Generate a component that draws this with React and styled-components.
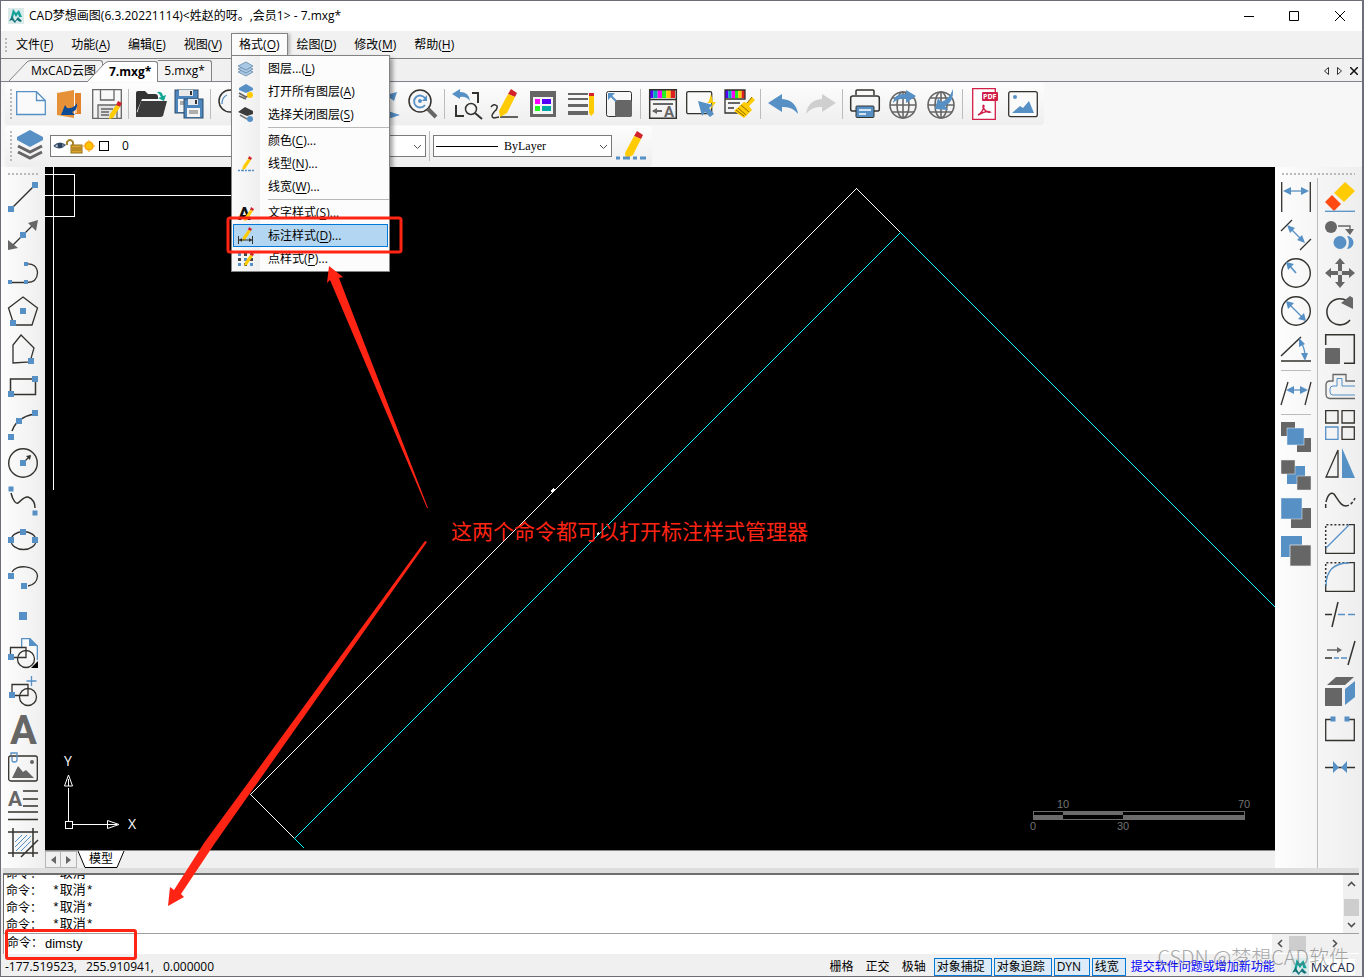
import React from "react";
import styled, { createGlobalStyle, css } from "styled-components";

const BLUE = "#5690c5";
const GREY = "#666666";
const DARK = "#33322e";
const YELLOW = "#ffcb05";
const RED = "#d2232a";
const MARK = "#ff2414";
const UI = '"Open Sans", "Noto Sans CJK SC", sans-serif';

const GlobalStyle = createGlobalStyle`
  * { box-sizing: border-box; }
  body { margin: 0; background: #f0f0f0; color: #000; font: 12px/16px ${UI}; }
  button, input, select { font: inherit; color: inherit; }
  u { text-underline-offset: 2px; }
`;

/* ---------- window frame ---------- */

const Window = styled.div`
  position: relative;
  display: flex;
  flex-direction: column;
  min-height: 100vh;
  overflow: hidden;
  border: 1px solid #6c6f7a;
  border-right-width: 2px;
`;

const TitleBar = styled.header`
  display: flex;
  align-items: center;
  height: 30px;
  padding-left: 7px;
  gap: 5px;
  background: #fff;
`;

const Title = styled.h1`
  flex: 1;
  margin: 0;
  font-size: 12px;
  font-weight: 400;
`;

const Plain = styled.button`
  display: flex;
  align-items: center;
  justify-content: center;
  padding: 0;
  border: 0;
  background: none;
  width: ${(p) => p.$w || 38}px;
  height: ${(p) => p.$h || 38}px;
  flex: none;
`;

const MenuBar = styled.nav`
  display: flex;
  align-items: center;
  height: 27px;
  padding-left: 4px;
  background: #f1f1f1;
`;

const MenuEntry = styled.div`
  position: relative;
`;

const MenuButton = styled.button`
  display: block;
  height: 23px;
  padding: 0 8px;
  border: 1px solid transparent;
  border-bottom: 0;
  background: none;
  white-space: nowrap;
  ${(p) => p.$open && css`
    border-color: #838383;
    background: #fbfbfb;
    padding: 0 7px;
    box-shadow: 3px 0 3px -1px #b5b5b5;
  `}
`;

const Dropdown = styled.div`
  position: absolute;
  z-index: 5;
  left: 0;
  top: 22px;
  width: 159px;
  padding: 1px 0;
  border: 1px solid #838383;
  background: linear-gradient(90deg, #fafafa 0, #efefef 28px, #fcfcfc 28px);
  box-shadow: 3px 3px 4px rgba(0, 0, 0, 0.35);
`;

const DropItem = styled.button`
  display: flex;
  align-items: center;
  gap: 14px;
  width: 155px;
  height: 23px;
  margin: 0 0 0 1px;
  padding: 0 0 0 4px;
  border: 1px solid ${(p) => (p.$active ? "#0078d7" : "transparent")};
  background: ${(p) => (p.$active ? "#b3d6f2" : "none")};
  white-space: nowrap;
`;

const DropRule = styled.hr`
  height: 1px;
  margin: 1px 0 1px 36px;
  border: 0;
  background: #b9b9b9;
`;

const Grip = styled.span`
  flex: none;
  width: 2px;
  height: ${(p) => p.$h}px;
  background: repeating-linear-gradient(#b9b9b9 0 2px, transparent 2px 4px);
`;

const GripRow = styled.span`
  height: 2px;
  margin: 6px 7px 3px;
  background: repeating-linear-gradient(90deg, #b9b9b9 0 2px, transparent 2px 4px);
`;

/* ---------- document tabs ---------- */

const TabBar = styled.div`
  display: flex;
  align-items: flex-end;
  height: 24px;
  border-top: 1px solid #838383;
  padding-left: 8px;
  background: linear-gradient(#f0f0f0, #f0f0f0) 0 0 / 100% 22px no-repeat, #83838f;
`;

const Tab = styled.button`
  position: relative;
  display: flex;
  height: 21px;
  padding: 0;
  border: 0;
  margin-left: ${(p) => (p.$overlap ? -16 : 0)}px;
  margin-bottom: ${(p) => (p.$active ? 0 : 1)}px;
  background: none;
  font-weight: ${(p) => (p.$active ? 700 : 400)};
  white-space: nowrap;
`;

const TabLabel = styled.span`
  height: 100%;
  padding: 2px 6px 0 ${(p) => (p.$slant ? 0 : 6)}px;
  border: 1px solid #838383;
  border-bottom: 0;
  border-left-width: ${(p) => (p.$slant || p.$joined ? 0 : 1)}px;
  border-radius: 0 3px 0 0;
  background: ${(p) => (p.$active ? "#fff" : "#f3f3f3")};
`;

const Spacer = styled.span`
  flex: 1;
`;

/* ---------- toolbars ---------- */

const ToolArea = styled.div`
  display: flex;
  flex-direction: column;
  align-items: flex-start;
  gap: 1px;
  height: 85px;
  padding: 1px 0 0 4px;
  background: #f7f7f7;
`;

const ToolRow = styled.div`
  display: flex;
  align-items: center;
  height: 42px;
  padding: 0 2px 0 5px;
  border-radius: 4px;
  background: linear-gradient(#fdfdfd, #eeeeee);
`;

const Divider = styled.span`
  flex: none;
  width: 6px;
  height: 30px;
  background: linear-gradient(#bcbcbc, #bcbcbc) 2px 0 / 1px 100% no-repeat;
`;

const Combo = styled.span`
  position: relative;
  display: flex;
  align-items: center;
  width: ${(p) => p.$w}px;
  height: 22px;
  margin-right: ${(p) => p.$gap || 0}px;
  border: 1px solid #7a7a7a;
  background: #fff;
  & > svg { position: absolute; pointer-events: none; }
`;

const Select = styled.select`
  appearance: none;
  width: 100%;
  height: 100%;
  padding: 0 20px 0 ${(p) => p.$pad}px;
  border: 0;
  background: none;
  font-size: 12px;
  ${(p) => p.$serif && css`font-family: "Liberation Serif", serif;`}
`;

const ComboArrow = styled.span`
  position: absolute;
  right: 3px;
  top: 3px;
  pointer-events: none;
  svg path { stroke-width: 1; }
`;

/* ---------- work area ---------- */

const Work = styled.main`
  display: flex;
  flex: 1;
`;

const SideTools = styled.div`
  display: flex;
  flex: none;
  flex-direction: column;
  background: linear-gradient(90deg, #fdfdfd, #eeeeee);
`;

const SideColumns = styled.div`
  display: flex;
  flex: 1;
`;

const SideColumn = styled.div`
  display: flex;
  flex-direction: column;
  align-items: center;
  width: ${(p) => p.$w}px;
  & + & { border-left: 1px solid #bcbcbc; }
`;

const SideRule = styled.hr`
  width: 30px;
  height: 1px;
  margin: 2px 0 3px;
  border: 0;
  background: #bcbcbc;
`;

const Center = styled.div`
  display: flex;
  flex: 1;
  flex-direction: column;
  min-width: 0;
`;

const Canvas = styled.div`
  position: relative;
  flex: 1;
  min-height: 400px;
  overflow: hidden;
  background: #000;
`;

const Drawing = styled.svg`
  position: absolute;
  inset: 0;
  width: 100%;
  height: 100%;
`;

const Pinned = styled.svg`
  position: absolute;
  bottom: 0;
  ${(p) => p.$side}: 0;
`;

const SheetBar = styled.div`
  display: flex;
  align-items: center;
  height: 18px;
  border-top: 1px solid #888;
`;

const SheetNav = styled(Plain)`
  border: 1px solid #b5b5b5;
  & + & { border-left: 0; }
`;

const SheetTab = styled.button`
  display: flex;
  height: 17px;
  padding: 0;
  border: 0;
  background: none;
  line-height: 15px;
`;

const SheetName = styled.span`
  border-bottom: 1px solid #000;
  background: #fff;
`;

/* ---------- command line ---------- */

const Command = styled.section`
  position: relative;
  border-top: 5px solid #dedede;
  margin: 0 3px 0 2px;
`;

const Log = styled.div`
  display: flex;
  height: 61px;
  border-top: 2px solid #6e6e6e;
  border-left: 1px solid #6e6e6e;
  border-bottom: 1px solid #a0a0a0;
  background: #fff;
`;

const LogLines = styled.div`
  display: flex;
  flex: 1;
  flex-direction: column;
  justify-content: flex-end;
  overflow: hidden;
  padding-left: 2px;
`;

const LogLine = styled.div`
  display: flex;
  flex: none;
  height: 17px;
  font: 13px/17px "Liberation Mono", "Noto Sans CJK SC", monospace;
`;

const Prompt = styled.span`
  flex: none;
  width: ${(p) => p.$w}px;
  font: 12px/16px "Noto Sans CJK SC", sans-serif;
  white-space: nowrap;
`;

const ScrollV = styled.div`
  display: flex;
  flex-direction: column;
  align-items: center;
  width: 16px;
  background: #f0f0f0;
`;

const Thumb = styled.span`
  width: ${(p) => p.$w}px;
  height: ${(p) => p.$h}px;
  background: #cdcdcd;
`;

const Entry = styled.label`
  display: flex;
  align-items: flex-start;
  height: 20px;
  padding-left: 3px;
  border-left: 1px solid #a0a0a0;
  background: #fff;
`;

const EntryInput = styled.input`
  flex: 1;
  height: 20px;
  padding: 0;
  border: 0;
  outline: 0;
  background: none;
  font: 13px/20px "Liberation Sans", sans-serif;
`;

const ScrollH = styled.span`
  display: flex;
  align-items: center;
  width: 87px;
  height: 19px;
  padding-right: 16px;
  background: #f0f0f0;
`;

const EntryMark = styled.span`
  position: absolute;
  z-index: 7;
  left: 2px;
  bottom: -6px;
  width: 132px;
  height: 31px;
  border: 3px solid ${MARK};
  border-radius: 3px;
  pointer-events: none;
`;

/* ---------- status bar ---------- */

const Status = styled.footer`
  display: flex;
  align-items: center;
  height: 22px;
  padding: 3px 7px 0 4px;
`;

const Coords = styled.output`
  display: flex;
  flex: 1;
  gap: 9px;
`;

const Toggle = styled.button`
  height: 18px;
  margin-right: ${(p) => (p.$on ? 2 : 4)}px;
  padding: 0 ${(p) => (p.$on ? 2 : 3)}px;
  border: 1px solid ${(p) => (p.$on ? "#0078d7" : "transparent")};
  background: ${(p) => (p.$on ? "#dcebf7" : "none")};
  line-height: 16px;
  white-space: nowrap;
  min-width: ${(p) => p.$w || 0}px;
  text-align: left;
`;

const Feedback = styled.a`
  margin: 0 16px 0 3px;
  color: #0000ff;
  text-decoration: none;
  white-space: nowrap;
`;

const Brand = styled.span`
  display: flex;
  align-items: center;
  gap: 2px;
  height: 16px;
  background: #fff;
  color: #1c2a4a;
  font-size: 13px;
`;

const Watermark = styled.span`
  position: absolute;
  z-index: 6;
  right: 13px;
  bottom: 5px;
  color: rgba(110, 110, 110, 0.6);
  font: 300 20px/28px "Noto Sans CJK SC", sans-serif;
  pointer-events: none;
  white-space: nowrap;
`;

const Notes = styled.svg`
  position: absolute;
  z-index: 7;
  left: -1px;
  top: -1px;
  pointer-events: none;
`;

/* ---------- icon parts ---------- */

const Node = ({ x, y, s = 6 }) => <rect x={x - s / 2} y={y - s / 2} width={s} height={s} fill={BLUE} />;
const L = ({ d, c = DARK, w = 1.3, ...r }) => <path d={d} fill="none" stroke={c} strokeWidth={w} {...r} />;
const F = ({ d, c = BLUE, ...r }) => <path d={d} fill={c} {...r} />;
const Box = ({ x = 0, y = 0, w, h, c = GREY, ...r }) => <rect x={x} y={y} width={w} height={h} fill={c} {...r} />;

const Pencil = () => (
  <g>
    <F d="M21 0 27 4 25 8 18 5Z" c={RED} />
    <F d="M18 5 25 8 17 24 10 28 9 22Z" c={YELLOW} />
  </g>
);
const MiniPencil = ({ x = 0, y = 0 }) => (
  <g transform={`translate(${x} ${y})`}>
    <F d="M8 0 11 2 10 4 7 3Z" c={RED} />
    <F d="M7 3 10 4 4 13 1 14 2 10Z" c={YELLOW} />
  </g>
);
const Lens = () => (
  <g>
    <circle cx="12" cy="12" r="11" fill="#f6f6f6" stroke={DARK} strokeWidth="1.5" />
    <L d="M20 20 28 28" c={GREY} w={4} />
  </g>
);
const Rainbow = ({ w }) => (
  <g>
    {["#5500ff", "#00a9b5", "#ff00ff", "#22ee22", "#ffcc00", "#dd2020"].map((c, i) => (
      <Box key={c} x={1 + (i * (w - 2)) / 6} y={1} w={(w - 2) / 6} h={8} c={c} />
    ))}
  </g>
);
const Globe = () => (
  <g fill="none" stroke={GREY} strokeWidth="1.6">
    <circle cx="15" cy="16" r="13" />
    <ellipse cx="15" cy="16" rx="6" ry="13" />
    <path d="M15 3V29M2 16H28M4 9H26M4 23H26" />
  </g>
);
const Dim = ({ x1, x2, y }) => (
  <g>
    <L d={`M${x1 + 3} ${y}H${x2 - 3}`} c={BLUE} />
    <F d={`M${x1} ${y}L${x1 + 8} ${y - 4}V${y + 4}ZM${x2} ${y}L${x2 - 8} ${y - 4}V${y + 4}Z`} />
  </g>
);
const Letter = ({ x, y, size, c = GREY }) => (
  <text x={x} y={y} fontSize={size} fontWeight="700" fill={c} fontFamily="Roboto, sans-serif">A</text>
);
const Floppy = ({ x, y, s }) => (
  <g transform={`translate(${x} ${y})`}>
    <Box w={s} h={s} c="#4d86bd" />
    <Box w={s} h={s} c="none" stroke="#2f4c68" />
    <Box x={4} y={0} w={s - 9} h={6} c="#e9e9e9" />
    <Box x={s - 8} y={1} w={2} h={4} c="#333" />
    <Box x={3} y={9} w={s - 6} h={s - 10} c="#f4f4f4" />
    <L d={`M5 12H${s - 5}M5 14H${s - 5}`} c={GREY} w={1} />
  </g>
);

const ICONS = {
  newDoc: <g><F d="M0 2H21L30 11V26H0Z" c="#fafafa" /><L d="M.7 2.7H20.5L29.3 11.5V25.5H.7ZM20.5 2.7V11.5H29" c={BLUE} /></g>,
  open: <g><F d="M3 4 20 1V29L3 26Z" c="#e69138" /><F d="M21 4H27V25H21Z" c="#e3842c" /><L d="M22 17V24" c="#fff" w={1} /><F d="M7 26 11 16 13 19Q20 20 23 14 24 21 18 23L21 26Z" c="#0c4a94" /></g>,
  save: <g><L d="M.7.7H29.3V29.3H.7ZM8.5 1V11H22V1M6 29V16H25V29" c={GREY} /><Box x={7} y={17} w={17} h={12} c="#e3e3e3" /><L d="M9 20H21M9 23H17M9 26H17" c={GREY} w={1.5} /><F d="M26 12 30 14 28 18 24 16Z" c={RED} /><F d="M24 16 28 18 21 29 17 30 18 25Z" c={YELLOW} /></g>,
  folder: <g><F d="M0 4Q0 2 2 2H9L12 5H19Q22 5 22 8V10H6L0 24Z" c="#333" /><F d="M5 12H31L27 27Q26 28 24 28H0Z" c="#3b3b3b" /><F d="M0 22V28H6Z" c="#3b3b3b" /><F d="M21 3Q26 2 27 7L30 6 28 12 22 9 25 8Q24 5 21 3Z" c="#12a594" /></g>,
  saveAll: <g><Floppy x={1} y={1} s={23} /><Floppy x={10} y={10} s={19} /></g>,
  lensArc: <g><Lens /><L d="M4 15Q4 8 9 6" c={BLUE} /></g>,
  lensPlus: <g><Lens /><L d="M7 12H17M12 7V17" c={BLUE} w={2} /></g>,
  lensMinus: <g><Lens /><L d="M7 12H17" c={BLUE} w={2} /></g>,
  extents: <g><L d="M4 26H24" c={BLUE} w={1.5} /><F d="M16 6 27 3 24 12Z" /><F d="M18 22 30 26 18 30Z" /></g>,
  lensRe: <g><Lens /><L d="M17 9A6 6 0 1 0 17 16" c={BLUE} w={1.8} /><F d="M19 6V12H14Z" /><circle cx="12" cy="12" r="2" fill={BLUE} /></g>,
  prevView: <g><F d="M0 5 8 0V3Q17 3 18 12 14 7 8 8V10Z" /><L d="M20 4H26V14M4 16V27H12" w={2} /><circle cx="19" cy="20" r="5.5" fill="#f6f6f6" stroke={DARK} strokeWidth="1.5" /><L d="M23 24 30 30" w={2} /></g>,
  sketch: <g><L d="M1 18Q4 14 7 17 8 20 4 23 0 28 4 29L9 28M10 28H28" w={1.5} /><Pencil /></g>,
  props: <g><Box x={2} y={2} w={26} h={26} /><Box x={5} y={8} w={20} h={17} c="#f5f5f5" /><Box x={7} y={10} w={5} h={5} c="#ff00ff" /><Box x={14} y={10} w={9} h={5} c="#5500ff" /><Box x={7} y={17} w={5} h={5} c="#22ff22" /><Box x={14} y={17} w={9} h={5} c="#00a9a5" /></g>,
  lines: <g><Box x={2} y={4} w={20} h={2} /><Box x={2} y={9} w={20} h={2} /><Box x={2} y={15} w={20} h={3} /><Box x={2} y={22} w={20} h={4} /><Box x={23} y={4} w={5} h={3} c={RED} /><F d="M23 7H28V24L25 27 23 24Z" c={YELLOW} /></g>,
  copyScale: <g><rect x="2.5" y="2.5" width="25" height="25" rx="2" fill="none" stroke={DARK} /><rect x="11" y="11" width="17" height="17" rx="2" fill={GREY} /><L d="M6 6 12 12" c={BLUE} w={2} /><F d="M4 4H11L4 11Z" /></g>,
  palette: <g><Rainbow w={28} /><L d="M1.7 .7H28.3V29.3H1.7ZM1 10.5H28" w={1.5} /><L d="M5 15H25M5 22H14" c={GREY} w={2} /><F d="M4 22 9 19V25Z" c={GREY} /><Letter x={16} y={28} size={15} /></g>,
  quickSel: <g><rect x=".7" y="2.7" width="25" height="22" rx="1.5" fill="#fafafa" stroke={DARK} strokeWidth="1.3" /><F d="M25 5 23 12 21 14 26 14 24 21 30 13H27Z" c={YELLOW} /><F d="M12 12 27 16 23 19 28 25 24 28 19 23 16 27Z" /></g>,
  match: <g><Rainbow w={22} /><L d="M1 1H21V10H1ZM1 10V24H18" w={1.3} /><L d="M4 14H16M4 19H10" c={GREY} w={2} /><F d="M28 8 31 11 25 17 28 21 20 29 10 22 20 13 23 14Z" c={YELLOW} /><L d="M12 21 20 27M14 19 22 26M17 16 25 23M28 8 23 14" c="#8c6a00" w={1} /></g>,
  undo: <F d="M0 14 14 5V10Q28 11 30 25 24 17 14 18V23Z" />,
  redo: <F d="M30 14 16 5V10Q2 11 0 25 6 17 16 18V23Z" c="#cfcfcf" />,
  print: <g><L d="M6 6V2Q6 1 7 1H23Q24 1 24 2V6M6 22H2Q.7 22 .7 20V9Q.7 7 3 7H27Q29.3 7 29.3 9V20Q29.3 22 28 22H24" w={1.5} /><rect x="6" y="17" width="18" height="11.5" rx="1" fill={BLUE} stroke={DARK} /><L d="M9 21H21M9 25H16" c="#fff" w={1.5} /></g>,
  globeOut: <g><Globe /><F d="M5 14Q6 4 18 5V1L28 7 18 14V10Q10 9 5 14Z" /></g>,
  globeIn: <g><Globe /><F d="M27 0Q28 13 19 17L22 21 9 20 12 9 15 13Q23 11 27 0Z" /></g>,
  pdf: <g><path d="M2.7-.3H25.3V30.3H2.7Z" fill="#fff" stroke="#d01f49" strokeWidth="1.3" /><rect x="12" y="3" width="16" height="9" rx="1" fill="#d01f49" /><text x="13" y="10" fontSize="7" fontWeight="700" fill="#fff" fontFamily="Open Sans, sans-serif">PDF</text><L d="M8 26Q13 23 14 17 13 15 13 18 16 24 20 23 17 21 8 26" c="#d01f49" w={1.5} /></g>,
  picture: <g><rect x=".7" y="2.7" width="28.6" height="25" rx="2" fill="#fafafa" stroke={DARK} strokeWidth="1.3" /><circle cx="7" cy="8" r="2" fill={BLUE} /><F d="M4 24 12 17 15 19 21 12 26 24Z" /></g>,
  layers: <g><F d="M14-1 27 6V9L14 16 1 9V6Z" /><L d="M2 15 14 21 26 15M2 21 14 27 26 21" c={GREY} w={3} /></g>,
  linePencil: <g><Pencil /><L d="M0 27H30" c={BLUE} w={3} strokeDasharray="4 3 7 3" /></g>,

  line: <g><L d="M3 27 27 3" w={1.5} /><Node x={3} y={27} /><Node x={27} y={3} /></g>,
  ray: <g><L d="M5 25 25 5" /><F d="M0 30V20L10 28ZM30 0 20 3 28 11Z" c={GREY} /><Node x={15} y={15} /></g>,
  pline: <g><L d="M2 24.500H18Q29 25 29.500 15 29 5 18 6" /><Node x={2} y={24} s={4} /><Node x={18} y={24} s={4} /><Node x={18} y={6} s={4} /></g>,
  pentagon: <g><L d="M15 1 29.500 12 24 29H6L.5 12Z" /><Node x={15} y={15} /><Node x={5} y={27} /></g>,
  poly: <g><L d="M13 1 26 14 22 28 5 29V11Z" /><Node x={23} y={27} /></g>,
  rect: <g><L d="M2.500 7H27.500V22.500H2.500Z" w={1.5} /><Node x={27} y={7} /><Node x={3} y={22} /></g>,
  arc: <g><L d="M3 25Q6 8 26 4" w={1.5} strokeDasharray="0 4 9 6 40" /><Node x={3} y={27} /><Node x={11} y={11} /><Node x={27} y={3} /></g>,
  circle: <g><circle cx="15" cy="15" r="14.300" fill="none" stroke={DARK} strokeWidth="1.4" /><L d="M15 15 22 8" /><F d="M18 8 23 7 22 12Z" c={DARK} /><Node x={15} y={15} /></g>,
  spline: <g><L d="M3 7C5 15 8 18 10 17 14 14 16 10 20 11 25 13 27 18 27 22" w={1.5} /><Node x={3} y={3} s={5} /><Node x={27} y={27} s={5} /></g>,
  ellipse: <g><ellipse cx="15.500" cy="16.500" rx="12.500" ry="9" fill="none" stroke={DARK} strokeWidth="1.3" /><Node x={15} y={8} /><Node x={3} y={16} /><Node x={27} y={16} /></g>,
  ellArc: <g><L d="M4 10C8 2 28 3 29.500 14 29 20 26 23 20 24" /><Node x={3} y={14} /><Node x={16} y={24} /></g>,
  point: <Node x={15} y={16} s={8} />,
  insert: <g><F d="M13 0H23L30 7V22H13Z" c="#fafafa" /><L d="M13.700 9V.7H22L29.300 8V22" c={BLUE} /><F d="M21 0 30 8H21Z" /><L d="M2.500 9.500H18V19.500H2.500Z" /><circle cx="18" cy="21" r="8.500" fill="none" stroke={DARK} strokeWidth="1.3" /><F d="M30 23V30H23Z" c="#000" /><Node x={3} y={19} /></g>,
  block: <g><L d="M4 8.500H20V19.500H4Z" /><circle cx="20" cy="21" r="8.500" fill="none" stroke={DARK} strokeWidth="1.3" /><L d="M23.500 0V10M18.500 5H28.500" c={BLUE} /><Node x={4} y={19} /></g>,
  text: <Letter x={2} y={30} size={40} />,
  image: <g><rect x=".7" y="4" width="28.600" height="25" rx="2" fill="none" stroke={DARK} strokeWidth="1.3" /><circle cx="24" cy="10" r="2" fill={GREY} /><F d="M4 26 10 14 15 20 18 18 26 26Z" c={GREY} /><L d="M3 3V1H9V8Q9 10 6 10 4 10 4 8V5" c={BLUE} /></g>,
  mtext: <g><Letter x={0} y={16} size={21} /><L d="M15 1H30M15 9H30M15 16H30M0 22H30M0 29.500H30" w={1.5} /></g>,
  hatch: <g><L d="M5 0V29M25 0V29M0 4H30M0 25H30M13 29 30 12" w={1.5} /><L d="M7 14 14 7M7 19 19 7M8 23 23 8M13 23 23 13" c={BLUE} w={1} /></g>,

  dimLin: <g><L d="M.7 0V30M29.300 0V30" /><Dim x1={2} x2={28} y={9} /></g>,
  dimAli: <g><L d="M0 11 11 0M19 30 30 19" /><L d="M8 7 22 21" c={BLUE} /><F d="M6 5 14 8 9 13ZM24 23 16 20 21 15Z" /></g>,
  dimRad: <g><circle cx="15" cy="15" r="14.300" fill="none" stroke={DARK} strokeWidth="1.4" /><L d="M8 7 15 15" c={BLUE} w={1.6} /><F d="M5 4 13 6 7 12Z" /></g>,
  dimDia: <g><circle cx="15" cy="15" r="14.300" fill="none" stroke={DARK} strokeWidth="1.4" /><L d="M7 7 23 23" c={BLUE} /><F d="M5 5 13 7 7 13ZM25 25 17 23 23 17Z" /></g>,
  dimAng: <g><L d="M0 22 20 3M0 27H30" w={1.5} /><L d="M20 8Q24 15 24 22" c={BLUE} /><F d="M18 4 24 10 18 13ZM24 27 20 19 27 19Z" /></g>,
  dimObl: <g><L d="M7 4 0 27M30 4 24 27" /><Dim x1={5} x2={27} y={12} /></g>,
  front1: <g><Box w={14} h={14} /><Box x={16} y={16} w={14} h={14} /><Box x={6} y={6} w={17} h={17} c={BLUE} stroke="#e9f2fa" strokeWidth=".5" /></g>,
  front2: <g><Box x={14} y={6} w={10} h={11} c={BLUE} /><Box x={6} y={14} w={11} h={10} c={BLUE} /><Box w={14} h={14} stroke="#eee" strokeWidth=".5" /><Box x={16} y={16} w={14} h={14} stroke="#eee" strokeWidth=".5" /></g>,
  front3: <g><Box x={10} y={10} w={20} h={20} /><Box w={21} h={21} c={BLUE} stroke="#eee" strokeWidth=".5" /></g>,
  front4: <g><Box w={21} h={21} c={BLUE} /><Box x={9} y={9} w={21} h={21} stroke="#eee" strokeWidth=".7" /></g>,

  erase: <g><F d="M20 0 30 9 19 20 9 11Z" c={YELLOW} /><F d="M7 13 16 22 9 29 0 20Z" c="#ff4a12" /><L d="M0 29.300H30" c={BLUE} /></g>,
  copy: <g><circle cx="6" cy="7" r="6" fill={GREY} /><L d="M13 6H25V10" c={GREY} /><F d="M20 9H29L25 15Z" c={GREY} /><circle cx="15" cy="22.500" r="6.500" fill={BLUE} /><path d="M22 16A6.500 6.500 0 1 1 22 29Q26 22 22 16" fill={BLUE} /></g>,
  move: <g><F d="M15 0 20 6H17V13H24V10L30 15 24 20V17H17V24H20L15 30 10 24H13V17H6V20L0 15 6 10V13H13V6H10Z" c={GREY} /><Box x={13} y={13} w={4} h={4} c="#ddd" /></g>,
  rotate: <g><L d="M22 5A13 13 0 1 0 25 24" w={1.5} /><F d="M16 7 25 0 28 2V13Z" c={GREY} /></g>,
  scale: <g><Box y={14} w={15} h={16} rx="1" /><L d="M.7 11V.7H29.300V29.300H19" w={1.5} /></g>,
  offset: <g><L d="M30 9H21V2.500H8V9H5Q1 9 1 13V22Q1 26.500 5 26.500H30" c={GREY} /><L d="M30 14H17V6.500H12V14H8Q5 14 5 17V20Q5 23 8 23H30" c={BLUE} w={1} /></g>,
  array: <g><L d="M.7.7H13V13H.7ZM17 .7H29.300V13H17ZM17 17H29.300V29.300H17Z" /><L d="M.7 17H13V29.300H.7Z" c={BLUE} /></g>,
  mirror: <g><L d="M13 2V29H1Z" /><F d="M17 0 30 30H17Z" /></g>,
  wave: <g><L d="M.7 22V18M1 16C3 8 6 6 9 8 14 15 16 20 21 20" w={1.5} /><L d="M21 20Q27 19 30 12" w={1.5} strokeDasharray="3 2" /></g>,
  chamfer: <g><L d="M.7 24V.7H24" strokeDasharray="2 2" w={1.5} /><L d="M24 .7H29.300V29.300H.7V24" /><L d="M1 24 24 1" c={BLUE} /></g>,
  fillet: <g><L d="M.7 24V.7H24" strokeDasharray="2 2" w={1.5} /><L d="M24 .7H29.300V29.300H.7V24" /><L d="M1 24Q1 1 24 1" c={BLUE} /></g>,
  trim: <g><L d="M0 14.500H7M7 27 13 2" w={1.5} /><L d="M13 14.500H20M23 14.500H30" c={BLUE} /></g>,
  extend: <g><L d="M2 12H14" c={GREY} w={1.5} /><F d="M12 9 17 12 12 15Z" c={GREY} /><L d="M0 20H7M23 27 30 3" w={1.5} /><L d="M9 20H14M16 20H22" c={BLUE} /></g>,
  cube: <g><F d="M2 9 11 1H29L20 9Z" c={GREY} /><Box y={12} w={17} h={18} /><F d="M20 13 30 5V21L20 29Z" /></g>,
  brk: <g><L d="M6 5.500H.7V26.500H29.300V5.500H24" /><Node x={8} y={5} s={5} /><Node x={22} y={5} s={5} /></g>,
  join: <g><L d="M0 15.500H30" w={1.5} /><F d="M8 9 14 15.500 8 21ZM22 9 16 15.500 22 21Z" /></g>,
};

const Icon = ({ name, size = 30 }) => (
  <svg width={size} height={size} viewBox="0 0 30 30" overflow="visible" aria-hidden="true">{ICONS[name]}</svg>
);
const Tool = ({ name }) => <Plain type="button" aria-label={name}><Icon name={name} /></Plain>;

const Logo = ({ size = 16 }) => (
  <svg width={size} height={size} viewBox="0 0 16 16" aria-hidden="true">
    <rect width="16" height="16" fill="#dcebea" />
    <F d="M3 9 5 1 8 5 11 2 14 9 11 9 10 6 8 9 6 6 5 10Z" c="#14a39a" />
    <F d="M1 13 4 8 7 13 10 9 14 13 12 14 9 12 7 15 4 12Z" c="#14737a" />
  </svg>
);

const Chevron = ({ rot = 0 }) => (
  <svg width="9" height="9" viewBox="0 0 9 9" aria-hidden="true">
    <path d="M1 3 4.500 6.500 8 3" fill="none" stroke="#505050" strokeWidth="1.6" transform={`rotate(${rot} 4.500 4.500)`} />
  </svg>
);

const MENU_ICONS = {
  stack: <g>{[11, 8, 5].map((y) => <path key={y} d={`M0 ${y}L8 ${y - 4} 15 ${y} 8 ${y + 4}Z`} fill="#a9c8e4" stroke="#5d7f9e" strokeWidth=".7" />)}</g>,
  stackOn: <g><F d="M8 0 15 4V6L8 9 1 6V4Z" /><L d="M1 9 8 13 12 11M1 12 8 15" c={GREY} w={1.7} /><circle cx="12" cy="11" r="3" fill={YELLOW} /></g>,
  stackOff: <g><F d="M7 0 15 4V7L9 9 0 5Z" c="#3b3b3b" /><L d="M2 8 9 12" c="#777" w={1.5} /><circle cx="12" cy="12" r="3" fill={BLUE} /></g>,
  ltype: <g><MiniPencil x={3} y={0} /><L d="M0 14.500H16" c={BLUE} strokeDasharray="2 1 3 1" /></g>,
  tstyle: <g><Letter x={0} y={15} size={19} c="#111" /><MiniPencil x={5} y={2} /></g>,
  dstyle: <g><MiniPencil x={3} y={-1} /><L d="M.5 8V16M14.500 8V16M1 12H14" w={1} /><F d="M1 12 4 10V14ZM14 12 11 10V14Z" c={DARK} /></g>,
  pstyle: (
    <g>
      {[2, 8, 14].map((x, i) => [4, 9, 14].map((y, j) => (
        <Box key={`${x}-${y}`} x={x - 2} y={y - 2} w={3} h={3} c={(i + j) % 2 ? "#444" : BLUE} />
      )))}
      <MiniPencil x={5} y={1} />
    </g>
  ),
};

const MENUS = [["文件", "F"], ["功能", "A"], ["编辑", "E"], ["视图", "V"], ["格式", "O"], ["绘图", "D"], ["修改", "M"], ["帮助", "H"]];
const FORMAT = [
  ["stack", "图层...(", "L", ")"], ["stackOn", "打开所有图层(", "A", ")"], ["stackOff", "选择关闭图层(", "S", ")"], null,
  [null, "颜色(", "C", ")..."], ["ltype", "线型(", "N", ")..."], [null, "线宽(", "W", ")..."], null,
  ["tstyle", "文字样式(", "S", ")..."], ["dstyle", "标注样式(", "D", ")..."], ["pstyle", "点样式(", "P", ")..."],
];
const TOP = ["newDoc", "open", "save", null, "folder", "saveAll", null, "lensArc", "lensPlus", "lensMinus", "lensArc", "extents", "lensRe", null,
  "prevView", "sketch", "props", "lines", "copyScale", null, "palette", "quickSel", "match", null, "undo", "redo", null,
  "print", "globeOut", "globeIn", null, "pdf", "picture"];
const LEFT = ["line", "ray", "pline", "pentagon", "poly", "rect", "arc", "circle", "spline", "ellipse", "ellArc", "point", "insert", "block", "text", "image", "mtext", "hatch"];
const RIGHT_A = ["dimLin", "dimAli", "dimRad", "dimDia", "dimAng", null, "dimObl", null, "front1", "front2", "front3", "front4"];
const RIGHT_B = ["erase", "copy", "move", "rotate", "scale", "offset", "array", "mirror", "wave", "chamfer", "fillet", "trim", "extend", "cube", "brk", "join"];

const Slant = ({ fill }) => (
  <svg width="22" height="21" viewBox="0 0 22 21" aria-hidden="true">
    <path d="M0 21 18 2Q20 .5 22 .5V21Z" fill={fill} />
    <path d="M0 21 18 2Q20 .5 22 .5" fill="none" stroke="#838383" />
  </svg>
);

function FormatMenu() {
  return (
    <Dropdown role="menu">
      {FORMAT.map((it, i) => it ? (
        <DropItem key={i} type="button" role="menuitem" $active={it[0] === "dstyle"}>
          <svg width="16" height="16" viewBox="0 0 16 16" overflow="visible" aria-hidden="true">{it[0] && MENU_ICONS[it[0]]}</svg>
          <span>{it[1]}<u>{it[2]}</u>{it[3]}</span>
        </DropItem>
      ) : <DropRule key={i} />)}
    </Dropdown>
  );
}

function CanvasView() {
  return (
    <Canvas>
      <Drawing aria-hidden="true" shapeRendering="crispEdges" fill="none">
        <path d="M855.500 65.500 811.500 21.500 205.500 627.500 249.500 671.500" stroke="#fff" />
        <path d="M259.500 681.500 249.500 671.500 855.500 65.500 1400.500 610.500" stroke="#00ffff" strokeWidth="1.2" />
        <path d="M506 325 509 322M552 368 554 366" stroke="#fff" strokeWidth="2" />
        <path d="M8.500 0V323M0 28.500H303M0 7.500H29.500V49.500H0" stroke="#fff" />
      </Drawing>
      <Pinned $side="left" width="110" height="110" aria-hidden="true" fill="none" stroke="#fff">
        <path d="M20.500 81.500H27.500V88.500H20.500ZM23.500 81V48M28 84.500H62" shapeRendering="crispEdges" />
        <path d="M23.500 35 19.500 46H27.500ZM23.500 39V46M74 84.500 62.500 80.500V88.500ZM62 84.500H72" />
        <text x="19" y="26" fontSize="14" fill="#fff" stroke="none" fontFamily="Open Sans, sans-serif">Y</text>
        <text x="83" y="89" fontSize="14" fill="#fff" stroke="none" fontFamily="Open Sans, sans-serif">X</text>
      </Pinned>
      <Pinned $side="right" width="250" height="60" aria-hidden="true">
        <g fill="#737373" fontSize="11" fontFamily="Liberation Sans, sans-serif" textAnchor="middle">
          <text x="38" y="18">10</text><text x="219" y="18">70</text><text x="8" y="40">0</text><text x="98" y="40">30</text>
        </g>
        <path d="M8 21H220V30H8ZM9 22V25H38V22ZM38 25V29H98V25ZM98 22V25H219V22Z" fill="#6b6b6b" fillRule="evenodd" />
      </Pinned>
    </Canvas>
  );
}

export default function App() {
  return (
    <>
      <GlobalStyle />
      <Window>
        <TitleBar>
          <Logo />
          <Title>CAD梦想画图(6.3.20221114)&lt;姓赵的呀。,会员1&gt; - 7.mxg*</Title>
          <Plain $w={45} $h={30} aria-label="最小化"><svg width="10" height="10"><path d="M0 5.500H10" stroke="#000" /></svg></Plain>
          <Plain $w={36} $h={30} aria-label="最大化"><svg width="10" height="10"><path d="M.5.5H9.500V9.500H.5Z" fill="none" stroke="#000" /></svg></Plain>
          <Plain $w={45} $h={30} aria-label="关闭"><svg width="10" height="10"><path d="M0 0 10 10M10 0 0 10" stroke="#000" /></svg></Plain>
        </TitleBar>
        <MenuBar>
          <Grip $h={14} />
          {MENUS.map(([name, key]) => (
            <MenuEntry key={key}>
              <MenuButton type="button" $open={key === "O"}>{name}(<u>{key}</u>)</MenuButton>
              {key === "O" && <FormatMenu />}
            </MenuEntry>
          ))}
        </MenuBar>
        <TabBar>
          <Tab type="button"><Slant fill="#f3f3f3" /><TabLabel $slant>MxCAD云图</TabLabel></Tab>
          <Tab type="button" $active $overlap><Slant fill="#fff" /><TabLabel $slant $active>7.mxg*</TabLabel></Tab>
          <Tab type="button"><TabLabel $joined>5.mxg*</TabLabel></Tab>
          <Spacer />
          <Plain $w={13} $h={22} aria-label="上一个"><svg width="5" height="8"><path d="M4.500.5V7.500L.5 4Z" fill="none" stroke="#333" /></svg></Plain>
          <Plain $w={13} $h={22} aria-label="下一个"><svg width="5" height="8"><path d="M.5.5V7.500L4.500 4Z" fill="none" stroke="#333" /></svg></Plain>
          <Plain $w={16} $h={22} aria-label="关闭标签"><svg width="8" height="8"><path d="M0 0 8 8M8 0 0 8" stroke="#111" strokeWidth="1.5" /></svg></Plain>
        </TabBar>
        <ToolArea>
          <ToolRow>
            <Grip $h={30} />
            {TOP.map((n, i) => (n ? <Tool key={i} name={n} /> : <Divider key={i} />))}
          </ToolRow>
          <ToolRow>
            <Grip $h={30} />
            <Tool name="layers" />
            <Combo $w={194} $gap={4}>
              <Select aria-label="图层" $pad={71}><option>0</option></Select>
              <svg width="62" height="18" viewBox="0 0 62 18" aria-hidden="true">
                <path d="M3 9Q8 4 14 8 9 13 3 9" fill="#dfe8f0" stroke="#4a5f78" strokeWidth="1.500" />
                <circle cx="9" cy="8.500" r="2.500" fill="#28405c" />
                <path d="M16 8V5Q19 1 22 5V9" fill="none" stroke="#a8842c" strokeWidth="2" />
                <rect x="20" y="8" width="11" height="8" fill="#dca52e" stroke="#94701c" />
                <path d="M21 11H30M21 13H30" stroke="#94701c" />
                <circle cx="38" cy="9" r="4" fill="#ffc400" stroke="#ff9d00" strokeWidth="1.500" />
                <path d="M38 3V15M32 9H44" stroke="#ff9d00" strokeDasharray="1 10" />
                <rect x="48.500" y="4.500" width="9" height="9" fill="#fff" stroke="#000" />
              </svg>
              <ComboArrow><Chevron /></ComboArrow>
            </Combo>
            <Combo $w={178} $gap={1}>
              <Select aria-label="颜色" $pad={30}><option>ByLayer</option></Select>
              <ComboArrow><Chevron /></ComboArrow>
            </Combo>
            <Divider />
            <Combo $w={179}>
              <Select aria-label="线型" $pad={70} $serif><option>ByLayer</option></Select>
              <svg width="66" height="3" aria-hidden="true"><path d="M2 1.500H64" stroke="#000" /></svg>
              <ComboArrow><Chevron /></ComboArrow>
            </Combo>
            <Tool name="linePencil" />
          </ToolRow>
        </ToolArea>
        <Work>
          <SideTools>
            <GripRow />
            <SideColumns>
              <SideColumn $w={44}>
                {LEFT.map((n) => <Tool key={n} name={n} />)}
              </SideColumn>
            </SideColumns>
          </SideTools>
          <Center>
            <CanvasView />
            <SheetBar>
              <SheetNav $w={16} $h={17} aria-label="向左"><svg width="5" height="8"><path d="M5 0V8L0 4Z" fill="#666" /></svg></SheetNav>
              <SheetNav $w={16} $h={17} aria-label="向右"><svg width="5" height="8"><path d="M0 0V8L5 4Z" fill="#666" /></svg></SheetNav>
              <SheetTab type="button">
                <svg width="12" height="17" aria-hidden="true"><path d="M1 0H12V17H8Z" fill="#fff" /><path d="M1 0 8 16.500H12" fill="none" stroke="#000" /></svg>
                <SheetName>模型</SheetName>
                <svg width="12" height="17" aria-hidden="true"><path d="M0 0H11L4 17H0Z" fill="#fff" /><path d="M11 0 4 16.500H0" fill="none" stroke="#000" /></svg>
              </SheetTab>
            </SheetBar>
          </Center>
          <SideTools>
            <GripRow />
            <SideColumns>
              <SideColumn $w={42}>
                {RIGHT_A.map((n, i) => (n ? <Tool key={i} name={n} /> : <SideRule key={i} />))}
              </SideColumn>
              <SideColumn $w={45}>
                {RIGHT_B.map((n) => <Tool key={n} name={n} />)}
              </SideColumn>
            </SideColumns>
          </SideTools>
        </Work>
        <Command>
          <Log>
            <LogLines>
              {[0, 1, 2, 3].map((i) => <LogLine key={i}><Prompt $w={46}>命令：</Prompt>*取消*</LogLine>)}
            </LogLines>
            <ScrollV>
              <Plain $w={16} $h={18} aria-label="向上"><Chevron rot={180} /></Plain>
              <Spacer />
              <Thumb $w={15} $h={17} />
              <Plain $w={16} $h={17} aria-label="向下"><Chevron /></Plain>
            </ScrollV>
          </Log>
          <Entry>
            <Prompt $w={38}>命令：</Prompt>
            <EntryInput defaultValue="dimsty" />
            <ScrollH>
              <Plain as="span" $w={17} $h={17}><Chevron rot={90} /></Plain>
              <Thumb $w={17} $h={15} />
              <Spacer />
              <Plain as="span" $w={17} $h={17}><Chevron rot={270} /></Plain>
            </ScrollH>
          </Entry>
          <EntryMark />
        </Command>
        <Status>
          <Coords><span>-177.519523,</span><span>255.910941,</span><span>0.000000</span></Coords>
          <Toggle type="button">栅格</Toggle>
          <Toggle type="button">正交</Toggle>
          <Toggle type="button">极轴</Toggle>
          <Toggle type="button" $on $w={58}>对象捕捉</Toggle>
          <Toggle type="button" $on $w={58}>对象追踪</Toggle>
          <Toggle type="button" $on $w={36}>DYN</Toggle>
          <Toggle type="button" $on $w={34}>线宽</Toggle>
          <Feedback href="#feedback">提交软件问题或增加新功能</Feedback>
          <Brand><Logo size={18} />MxCAD</Brand>
        </Status>
        <Watermark>CSDN @梦想CAD软件</Watermark>
        <Notes width="820" height="920" fill={MARK}>
          <rect x="228" y="218" width="173" height="34" rx="2" fill="none" stroke={MARK} strokeWidth="3" />
          <path d="M329 266 327 283 330 280 427 508 428 508 339 278 343 277Z" />
          <path d="M168 906 170 887 174 890 204 843 425 541 427 542 215 843 181 894 184 897Z" />
          <text x="451" y="539" fontSize="21" fontFamily="Noto Sans CJK SC, sans-serif">这两个命令都可以打开标注样式管理器</text>
        </Notes>
      </Window>
    </>
  );
}
